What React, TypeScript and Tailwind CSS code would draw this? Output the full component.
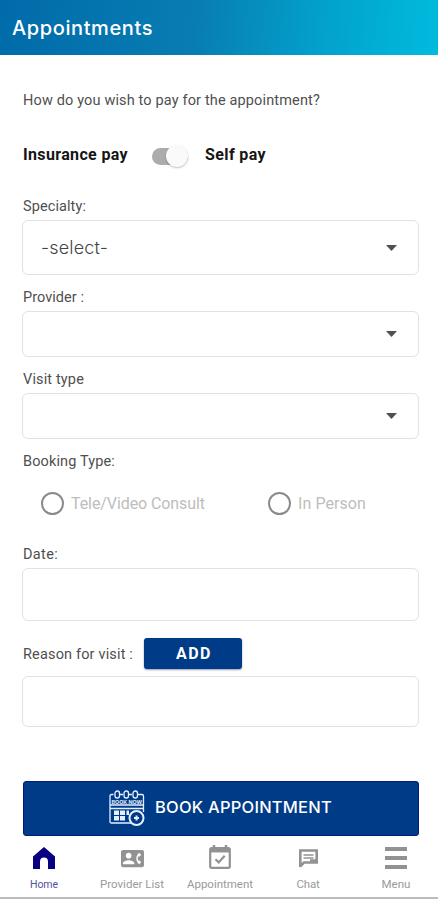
import React from "react";
import { MdContactPhone } from "react-icons/md";

type FittedProps = { width: number; children: string; className?: string };

/* A single line of text whose glyphs are spread over a given width. */
function Fitted({ width, children, className = "" }: FittedProps) {
  const ref = React.useRef<HTMLSpanElement>(null);
  const [spacing, setSpacing] = React.useState(0);
  React.useLayoutEffect(() => {
    if (ref.current) {
      const natural = ref.current.getBoundingClientRect().width;
      setSpacing((width - natural) / children.length);
    }
  }, [width, children]);
  return (
    <span ref={ref} className={"inline-block whitespace-nowrap " + className} style={{ letterSpacing: spacing }}>
      {children}
    </span>
  );
}

function Label({ children, width, className }: { children: string; width: number; className: string }) {
  return (
    <div className={"flex items-center pt-[2px] text-[14.5px] text-[#4f4f4f] " + className}>
      <Fitted width={width}>{children}</Fitted>
    </div>
  );
}

function Field({ className, select, children }: { className: string; select?: boolean; children?: React.ReactNode }) {
  return (
    <div className={"flex items-center justify-between rounded-[6px] border-[1.5px] border-[#e2e2e2] pl-[18px] pr-[21px] " + className}>
      <div>{children}</div>
      {select && (
        <svg className="h-[6px] w-[11px]" viewBox="0 0 11 6">
          <path d="M0 0h11L5.500 6z" fill="#505050" />
        </svg>
      )}
    </div>
  );
}

function Radio({ label, width, className = "" }: { label: string; width: number; className?: string }) {
  return (
    <div className={"flex items-center gap-[7px] text-[16px] text-[#bdbdbd] " + className}>
      <span className="h-[23px] w-[23px] rounded-full border-2 border-[#8a8a8a]" />
      <Fitted width={width} className="mt-px">{label}</Fitted>
    </div>
  );
}

function BookIcon() {
  return (
    <svg className="-mt-[2px] h-[36px] w-[37px]" viewBox="0 0 37 36" fill="none" stroke="#e6efff" strokeWidth="1.300">
      <path d="M27 33H2.500Q1 33 1 31.500V6Q1 4.500 2.500 4.500h2M10 4.500h4M19 4.500h4M28 4.500h5Q34.500 4.500 34.500 6v16" />
      <path d="M1 15h33.500M1 18.500h33.500" />
      <rect x="6" y="1" width="4.500" height="7" rx="2.200" />
      <rect x="15" y="1" width="4.500" height="7" rx="2.200" />
      <rect x="24" y="1" width="4.500" height="7" rx="2.200" />
      <text x="2.500" y="13.800" fontSize="5" fontWeight="700" textLength="30.500" lengthAdjust="spacingAndGlyphs" fill="#e6efff" stroke="none">BOOK NOW</text>
      <g fill="#e6efff" stroke="none">
        <rect x="5" y="20.500" width="5" height="4.500" />
        <rect x="11" y="20.500" width="5" height="4.500" />
        <rect x="17.500" y="20.500" width="2.500" height="4.500" />
        <rect x="5" y="26" width="5" height="4.500" />
        <rect x="11" y="26" width="5" height="4.500" />
      </g>
      <circle cx="27.500" cy="28" r="7" fill="#003b87" strokeWidth="2" />
      <path d="M27.500 25.500v5M25 28h5" strokeWidth="2" />
    </svg>
  );
}

function NavItem({ label, width, active, children }: { label: string; width: number; active?: boolean; children: React.ReactNode }) {
  return (
    <div className={"flex w-[88px] shrink-0 flex-col items-center " + (active ? "text-[#0a0082]" : "text-[#929292]")}>
      <div className="flex h-[30px] items-center">{children}</div>
      <div className={"mt-[3px] leading-[16px] " + (active ? "pt-px text-[10.5px] text-[#5550a0]" : "text-[11.5px] text-[#9a9a9a]")}>
        <Fitted width={width}>{label}</Fitted>
      </div>
    </div>
  );
}

export default function App() {
  return (
    <div className="flex h-[900px] w-[438px] flex-col overflow-hidden bg-white font-['Roboto',sans-serif]">
      <header className="flex h-[55px] items-center bg-[linear-gradient(95deg,#006ba9_0%,#087db3_45%,#02a3cd_75%,#00b9dc_98%)] pl-[12px] font-['Inter',sans-serif] text-[20px] font-medium text-white">
        <Fitted width={141}>Appointments</Fitted>
      </header>

      <main className="flex flex-col pl-[22px] pr-[19px]">
        <Label width={297} className="mt-[35px] h-[20px] pl-px">How do you wish to pay for the appointment?</Label>

        <div className="mt-[32px] flex h-[28px] items-center pl-px text-[16px] font-bold text-[#151515]">
          <Fitted width={105} className="-mt-[3px]">Insurance pay</Fitted>
          <div className="ml-[24px] flex h-[17px] w-[36px] items-center justify-end rounded-full bg-[#acacac]">
            <span className="h-[22px] w-[22px] shrink-0 rounded-full bg-[#fafafa] shadow-[0_1px_2px_rgba(0,0,0,0.25)]" />
          </div>
          <Fitted width={61} className="-mt-[3px] ml-[17px]">Self pay</Fitted>
        </div>

        <Label width={63} className="mt-[26px] h-[20px] pl-px">Specialty:</Label>
        <Field className="mt-[4px] h-[55px]" select>
          <span className="font-['Inter',sans-serif] text-[18px] font-light text-[#444]">
            <Fitted width={67}>-select-</Fitted>
          </span>
        </Field>

        <Label width={61} className="mt-[12px] h-[20px] pl-px">Provider :</Label>
        <Field className="mt-[4px] h-[46px]" select />

        <Label width={61} className="mt-[12px] h-[20px] pl-px">Visit type</Label>
        <Field className="mt-[4px] h-[46px]" select />

        <Label width={92} className="mt-[12px] h-[20px] pl-px">Booking Type:</Label>
        <div className="mt-[20px] flex h-[24px] items-center pl-[19px]">
          <Radio label="Tele/Video Consult" width={134} className="w-[227px]" />
          <Radio label="In Person" width={68} />
        </div>

        <Label width={35} className="mt-[29px] h-[20px] pl-px">Date:</Label>
        <Field className="mt-[4px] h-[53px]" />

        <div className="mt-[17px] flex h-[31px] items-center">
          <Label width={110} className="mt-px h-[20px] w-[122px] pl-px">Reason for visit :</Label>
          <button className="h-[31px] w-[98px] rounded-[3px] bg-[#003b87] pt-px text-[16px] font-bold text-white shadow-[0_1px_2px_rgba(0,0,80,0.4)]">
            <Fitted width={36} className="ml-[2px]">ADD</Fitted>
          </button>
        </div>
        <Field className="mt-[7px] h-[51px]" />

        <button className="ml-px mt-[54px] flex h-[55px] items-center rounded-[3px] border border-[#001d7d] bg-[#003b87] pl-[85px] font-['Inter',sans-serif] text-[16.5px] font-medium text-white">
          <BookIcon />
          <Fitted width={177} className="-mt-[2px] ml-[9px]">BOOK APPOINTMENT</Fitted>
        </button>
      </main>

      <nav className="flex h-[63px] border-b-2 border-[#bcbcbc] pt-[7px]">
        <NavItem label="Home" width={28} active>
          <svg className="h-[22px] w-[22px]" viewBox="0 0 22 22" fill="currentColor">
            <path d="M11 0L0 9.500V22h7v-7.500a4 4 0 0 1 8 0V22h7V9.500z" />
          </svg>
        </NavItem>
        <NavItem label="Provider List" width={64}>
          <MdContactPhone className="h-[23px] w-[23px]" />
        </NavItem>
        <NavItem label="Appointment" width={66}>
          <svg className="mb-[2px] h-[24px] w-[22px]" viewBox="0 0 22 24" fill="none" stroke="currentColor">
            <path d="M5 0v4M17 0v4" strokeWidth="2.400" />
            <rect x="1.200" y="3.200" width="19.600" height="19.600" rx="1.500" strokeWidth="2.200" />
            <path d="M1 5.200h20" strokeWidth="4.500" />
            <path d="M6.500 14.200l3.200 3.200 6-6.600" strokeWidth="2.200" />
          </svg>
        </NavItem>
        <NavItem label="Chat" width={23}>
          <svg className="h-[19px] w-[19px]" viewBox="0 0 19 19" fill="none" stroke="currentColor">
            <path d="M1.300 18V1.500h16.400v12H5L1.500 17z" strokeWidth="2.600" />
            <path d="M4.500 6h10M4.500 9h10" strokeWidth="1.300" />
            <path d="M11 11.500h6" strokeWidth="2.500" />
          </svg>
        </NavItem>
        <NavItem label="Menu" width={29}>
          <svg className="h-[22px] w-[22px]" viewBox="0 0 22 22" fill="currentColor">
            <path d="M0 0h22v4H0zM0 9h22v4H0zM0 18h22v4H0z" />
          </svg>
        </NavItem>
      </nav>
    </div>
  );
}
